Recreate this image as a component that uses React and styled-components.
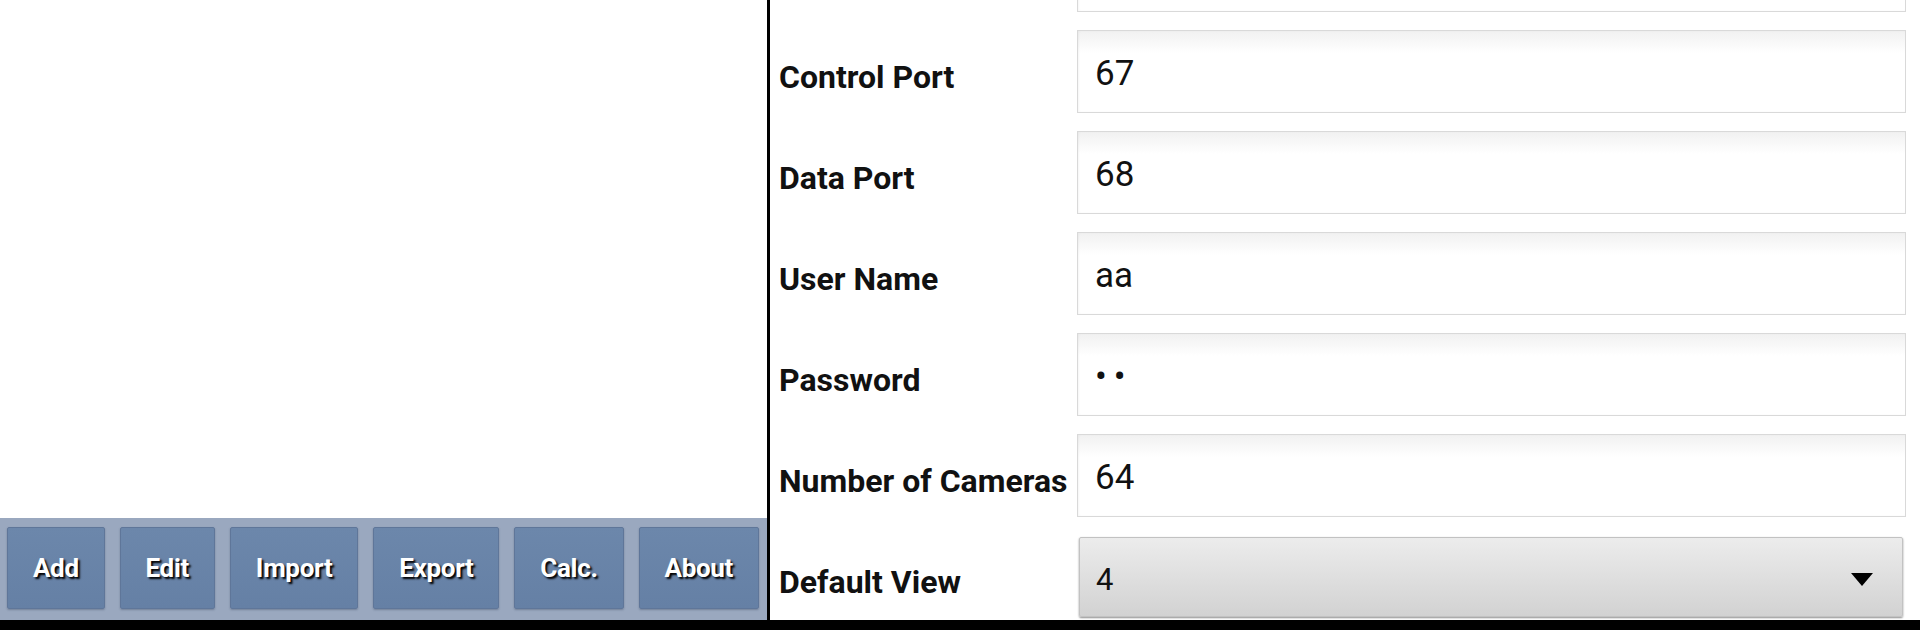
import styled, { createGlobalStyle } from 'styled-components';

const GlobalStyle = createGlobalStyle`
  html, body {
    margin: 0;
    padding: 0;
    background: #000;
  }
  #root {
    height: 630px;
  }
`;

const buttons = ['Add', 'Edit', 'Import', 'Export', 'Calc.', 'About'];

// first row is scrolled mostly out of view, only the bottom of its box shows
const fields = [
  { label: '', value: '' },
  { label: 'Control Port', value: '67' },
  { label: 'Data Port', value: '68' },
  { label: 'User Name', value: 'aa' },
  { label: 'Password', value: '••', secret: true },
  { label: 'Number of Cameras', value: '64' },
];

const App = () => {
  return (
    <>
      <GlobalStyle />
      <Screen>
        <Main>
          <ListPane>
            <DeviceList />
            <ButtonBar>
              {buttons.map((b) => (
                <BarButton key={b}>{b}</BarButton>
              ))}
            </ButtonBar>
          </ListPane>
          <Divider />
          <FormPane>
            <Form>
              {fields.map((f, i) => (
                <Row key={i}>
                  <Label>{f.label}</Label>
                  <Field $secret={f.secret}>{f.value}</Field>
                </Row>
              ))}
              <Row $spinner>
                <Label>Default View</Label>
                <Spinner>
                  <SpinnerValue>4</SpinnerValue>
                  <Arrow />
                </Spinner>
              </Row>
            </Form>
          </FormPane>
        </Main>
        <NavStrip />
      </Screen>
    </>
  );
};

const Screen = styled.div`
  height: 630px;
  display: flex;
  flex-direction: column;
  background: #000;
`;

const Main = styled.div`
  height: 620px;
  display: flex;
`;

const ListPane = styled.div`
  width: 767px;
  display: flex;
  flex-direction: column;
  background: #fff;
`;

const DeviceList = styled.div`
  flex: 1;
`;

const ButtonBar = styled.div`
  height: 102px;
  box-sizing: border-box;
  padding: 9px 8px 11px 7px;
  display: flex;
  gap: 15px;
  background: #9aa8bf;
`;

const BarButton = styled.button`
  flex: 1 1 auto;
  padding: 0 18px;
  border: 1px solid #5f7699;
  border-radius: 2px;
  background: linear-gradient(#6c87ab, #6580a5);
  box-shadow: 0 1px 2px rgba(40, 55, 80, 0.35);
  color: #fff;
  font-family: Roboto, 'Liberation Sans', sans-serif;
  font-weight: 700;
  font-size: 26px;
  letter-spacing: -0.3px;
  text-shadow: 2px 2px 2px #000;
`;

const Divider = styled.div`
  width: 3px;
  background: #000;
`;

const FormPane = styled.div`
  flex: 1;
  background: #fff;
  overflow: hidden;
`;

const Form = styled.div`
  margin-top: -71px;
  padding: 0 14px 0 9px;
  display: flex;
  flex-direction: column;
  gap: 18px;
`;

const Row = styled.div`
  display: grid;
  grid-template-columns: 298px 1fr;
  align-items: center;
  margin-top: ${(p) => (p.$spinner ? '2px' : '0')};
  padding-right: ${(p) => (p.$spinner ? '3px' : '0')};
`;

const Label = styled.div`
  padding-top: 10px;
  font-family: Roboto, 'Liberation Sans', sans-serif;
  font-weight: 700;
  font-size: 32px;
  color: #111;
  white-space: nowrap;
`;

const Field = styled.div`
  height: 83px;
  box-sizing: border-box;
  display: flex;
  align-items: center;
  padding: 4px 0 0 17px;
  border: 1px solid #d9d9d9;
  background: linear-gradient(#f1f1f1, #fff 22px);
  box-shadow: inset 1px 0 2px rgba(0, 0, 0, 0.04);
  font-family: Roboto, 'Open Sans', sans-serif;
  font-size: 35px;
  letter-spacing: ${(p) => (p.$secret ? '7px' : '0')};
  color: #111;
`;

const Spinner = styled.div`
  height: 80px;
  box-sizing: border-box;
  margin-left: 2px;
  display: flex;
  align-items: center;
  justify-content: space-between;
  padding: 4px 29px 0 16px;
  border: 1px solid #c2c2c2;
  border-radius: 2px;
  background: linear-gradient(#ececec, #d2d2d2);
  box-shadow: 0 1px 2px rgba(0, 0, 0, 0.45);
`;

const SpinnerValue = styled.span`
  font-family: Roboto, 'Open Sans', sans-serif;
  font-size: 31px;
  color: #111;
`;

const Arrow = styled.span`
  width: 0;
  height: 0;
  border-left: 11.5px solid transparent;
  border-right: 11.5px solid transparent;
  border-top: 13px solid #000;
`;

const NavStrip = styled.div`
  height: 10px;
  background: #000;
`;

export default App;
